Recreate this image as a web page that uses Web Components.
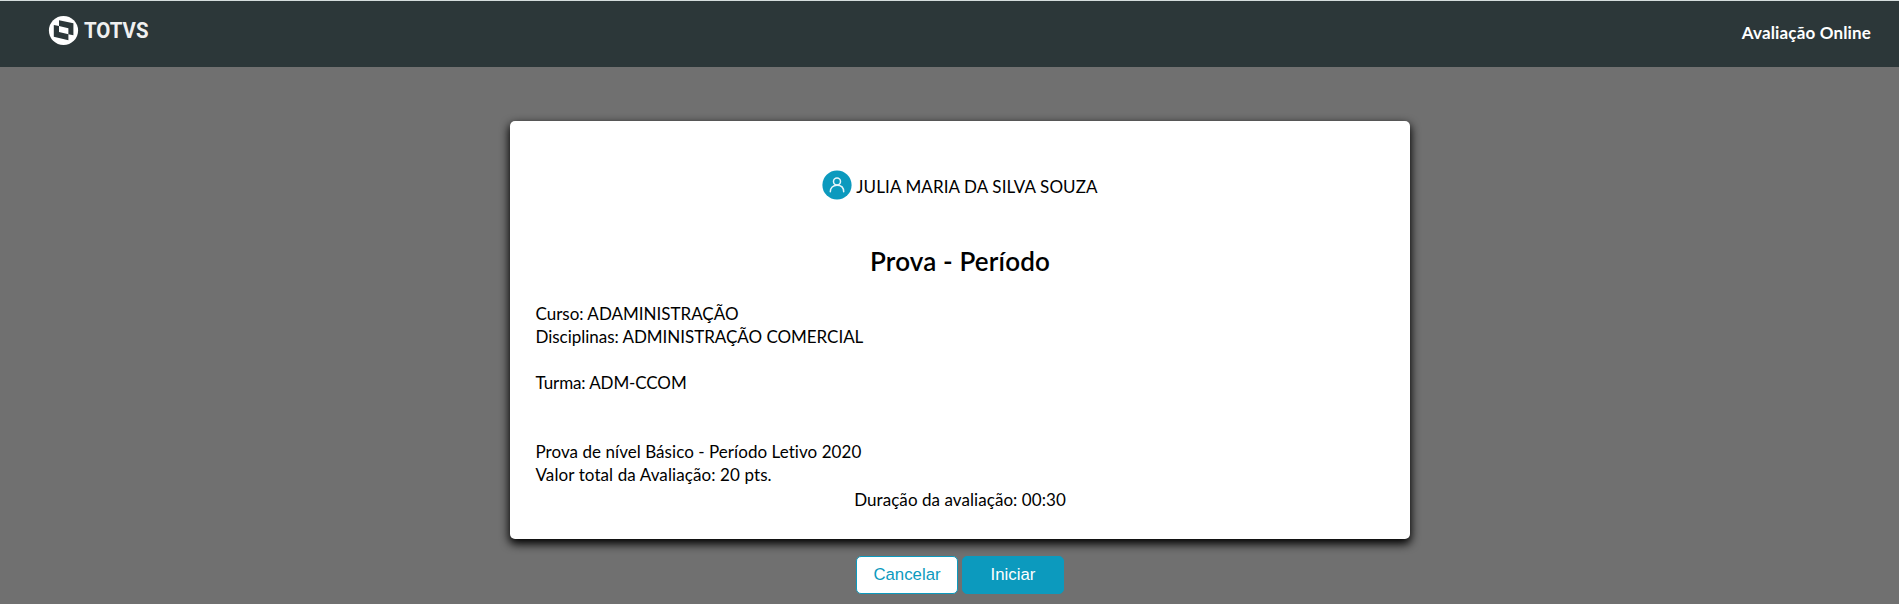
<!DOCTYPE html>
<html lang="pt-BR">
<head>
<meta charset="utf-8">
<title>Avaliação Online</title>
<style>
    body{
        margin: 0;
        height: 604px;
        overflow: hidden;
        background-color: #707070;
        color: #000;
        font-family: Lato, "Open Sans", sans-serif;
        font-size: 17px;
        font-variant-ligatures: none;
    }
</style>
</head>
<body>
<barra-topo>Avaliação Online</barra-topo>
<tarjeta-prova>
    <info-usuario slot="usuario">JULIA MARIA DA SILVA SOUZA</info-usuario>
    <span slot="titulo">Prova - Período</span>
    <linha-texto>Curso: ADAMINISTRAÇÃO</linha-texto>
    <linha-texto style="letter-spacing: -0.03px">Disciplinas: ADMINISTRAÇÃO COMERCIAL</linha-texto>
    <linha-texto></linha-texto>
    <linha-texto style="letter-spacing: -0.1px">Turma: ADM-CCOM</linha-texto>
    <linha-texto></linha-texto>
    <linha-texto></linha-texto>
    <linha-texto style="letter-spacing: 0.05px">Prova de nível Básico - Período Letivo 2020</linha-texto>
    <linha-texto style="letter-spacing: 0.1px">Valor total da Avaliação: 20 pts.</linha-texto>
    <span slot="duracao">Duração da avaliação: 00:30</span>
</tarjeta-prova>
<barra-botoes>
    <meu-botao>Cancelar</meu-botao>
    <meu-botao primario>Iniciar</meu-botao>
</barra-botoes>

<script>
class BarraTopo extends HTMLElement{
    constructor(){
        super()
        const shadowRoot = this.attachShadow({mode: 'open'})
        const html = `  <logo-totvs></logo-totvs>
                        <strong><slot></slot></strong>`

        const css = `<style>
                    :host{
                        display: flex;
                        justify-content: space-between;
                        box-sizing: border-box;
                        height: 67px;
                        padding: 14px 28px 0 48px;
                        border-top: 1px solid #d5dddd;
                        background-color: #2c3739;
                        color: #fff;
                    }
                    strong{
                        font-weight: 700;
                        letter-spacing: 0.15px;
                        line-height: 36px;
                    }
                </style>`
        shadowRoot.innerHTML = css + html
    }
}

class LogoTotvs extends HTMLElement{
    constructor(){
        super()
        const shadowRoot = this.attachShadow({mode: 'open'})
        const html = `  <svg width="120" height="40" viewBox="0 0 120 40">
                            <circle cx="15.5" cy="15.5" r="14.6" fill="#fff"/>
                            <path d="M11 5.2L25.4 8.2V20.2L20.4 19.2V25.2L5.800 21.800V10L11 11Z" fill="#2c3739"/>
                            <path d="M11 11L20.4 13.200V19.2L11 17Z" fill="#fff"/>
                            <text x="36" y="23" textLength="64.500" lengthAdjust="spacingAndGlyphs">TOTVS</text>
                        </svg>`

        const css = `<style>
                    :host{
                        display: block;
                    }
                    svg{
                        display: block;
                        overflow: visible;
                    }
                    text{
                        font-family: Roboto, sans-serif;
                        font-size: 22.5px;
                        font-weight: 700;
                        fill: #f0f0f0;
                    }
                </style>`
        shadowRoot.innerHTML = css + html
    }
}

class TarjetaProva extends HTMLElement{
    constructor(){
        super()
        const shadowRoot = this.attachShadow({mode: 'open'})
        const html = `  <slot name="usuario"></slot>
                        <h1><slot name="titulo"></slot></h1>
                        <div id="dados"><slot></slot></div>
                        <div id="duracao"><slot name="duracao"></slot></div>`

        const css = `<style>
                    :host{
                        display: block;
                        box-sizing: border-box;
                        width: 900px;
                        height: 418px;
                        margin: 54px 0 0 510px;
                        padding: 47px 25px 0;
                        border-radius: 5px;
                        background-color: #fff;
                        box-shadow: 0 4px 10px 1px #000;
                    }
                    h1{
                        margin: 43px 0 0;
                        font-size: 26px;
                        font-weight: 600;
                        letter-spacing: 0.15px;
                        line-height: 36px;
                        text-align: center;
                    }
                    #dados{
                        margin: 23px 0 0 0.5px;
                    }
                    #duracao{
                        margin-top: 2px;
                        letter-spacing: 0.06px;
                        line-height: 23px;
                        text-align: center;
                    }
                </style>`
        shadowRoot.innerHTML = css + html
    }
}

class InfoUsuario extends HTMLElement{
    constructor(){
        super()
        const shadowRoot = this.attachShadow({mode: 'open'})
        const html = `  <svg width="30" height="30" viewBox="0 0 30 30">
                            <circle cx="15" cy="15" r="14.6" fill="#0c9abe"/>
                            <circle cx="15" cy="11.6" r="3.5"/>
                            <path d="M8.3 21.8C8.3 17.6 11 15.2 15 15.2S21.7 17.6 21.7 21.8"/>
                        </svg>
                        <span><slot></slot></span>`

        const css = `<style>
                    :host{
                        display: flex;
                        justify-content: center;
                        gap: 4px;
                        height: 32px;
                    }
                    svg{
                        flex: none;
                        margin-top: 1.5px;
                        fill: none;
                        stroke: #e6f5f9;
                        stroke-width: 1.5;
                        stroke-linecap: round;
                    }
                    svg circle:first-child{
                        stroke: none;
                    }
                    span{
                        letter-spacing: 0.11px;
                        line-height: 38px;
                    }
                </style>`
        shadowRoot.innerHTML = css + html
    }
}

class LinhaTexto extends HTMLElement{
    constructor(){
        super()
        const shadowRoot = this.attachShadow({mode: 'open'})
        const css = `<style>
                    :host{
                        display: block;
                        height: 23px;
                        line-height: 23px;
                        white-space: nowrap;
                    }
                </style>`
        shadowRoot.innerHTML = css + `<slot></slot>`
    }
}

class BarraBotoes extends HTMLElement{
    constructor(){
        super()
        const shadowRoot = this.attachShadow({mode: 'open'})
        const css = `<style>
                    :host{
                        display: flex;
                        justify-content: center;
                        gap: 4px;
                        width: 900px;
                        margin: 17px 0 0 510px;
                    }
                </style>`
        shadowRoot.innerHTML = css + `<slot></slot>`
    }
}

class MeuBotao extends HTMLElement{
    constructor(){
        super()
        const shadowRoot = this.attachShadow({mode: 'open'})
        const html = `<button><slot></slot></button>`

        const css = `<style>
                    :host{
                        display: block;
                    }
                    button{
                        display: block;
                        width: 102px;
                        height: 38px;
                        padding: 0;
                        border: 1px solid #0c9abe;
                        border-radius: 5px;
                        background-color: #fff;
                        color: #0c9abe;
                        font-family: "Liberation Sans", Arial, sans-serif;
                        font-size: 16.8px;
                    }
                    :host([primario]) button{
                        background-color: #0c9abe;
                        color: #fff;
                    }
                </style>`
        shadowRoot.innerHTML = css + html
    }
}

customElements.define('barra-topo', BarraTopo)
customElements.define('logo-totvs', LogoTotvs)
customElements.define('tarjeta-prova', TarjetaProva)
customElements.define('info-usuario', InfoUsuario)
customElements.define('linha-texto', LinhaTexto)
customElements.define('barra-botoes', BarraBotoes)
customElements.define('meu-botao', MeuBotao)
</script>
</body>
</html>
